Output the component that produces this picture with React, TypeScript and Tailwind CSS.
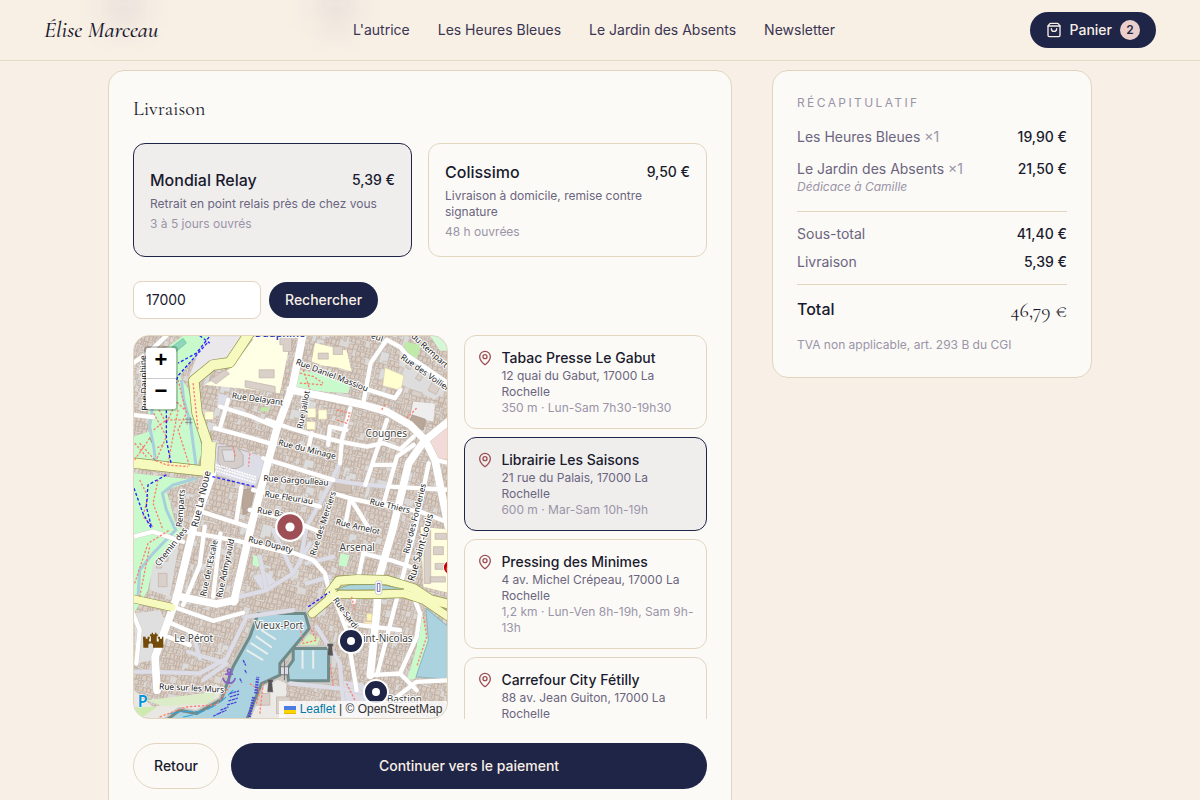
import { useState } from "react";
import { MapPin, ShoppingBag } from "lucide-react";

type Relay = { name: string; address: string; info: string };

const relays: Relay[] = [
  { name: "Tabac Presse Le Gabut", address: "12 quai du Gabut, 17000 La Rochelle", info: "350 m · Lun-Sam 7h30-19h30" },
  { name: "Librairie Les Saisons", address: "21 rue du Palais, 17000 La Rochelle", info: "600 m · Mar-Sam 10h-19h" },
  { name: "Pressing des Minimes", address: "4 av. Michel Crépeau, 17000 La Rochelle", info: "1,2 km · Lun-Ven 8h-19h, Sam 9h-13h" },
  { name: "Carrefour City Fétilly", address: "88 av. Jean Guiton, 17000 La Rochelle", info: "1,8 km · Lun-Sam 8h-20h" },
];

const shippingOptions = [
  { name: "Mondial Relay", price: "5,39 €", text: "Retrait en point relais près de chez vous", delay: "3 à 5 jours ouvrés" },
  { name: "Colissimo", price: "9,50 €", text: "Livraison à domicile, remise contre signature", delay: "48 h ouvrées" },
];

const serif = "font-['Cormorant_Garamond','Liberation_Serif',serif]";

/* Rows of small houses, laid along the slant of the old town's streets. */
function houses(): string {
  let seed = 7;
  const rnd = () => {
    seed = (seed * 16807) % 2147483647;
    return seed / 2147483647;
  };
  let d = "";
  for (let y = -300; y < 1250; y += 17) {
    for (let x = -50; x < 1350; ) {
      const w = 6 + Math.floor(rnd() * 11);
      const h = 11 + Math.floor(rnd() * 6);
      if (rnd() > 0.1) d += `M${x} ${y + Math.floor(rnd() * 3)}h${w}v${h}h${-w}z`;
      x += w + (rnd() > 0.9 ? 6 : 0);
    }
  }
  return d;
}
const housePath = houses();

/* Courtyards that break up the rows. */
function yards(): string {
  let seed = 91;
  const rnd = () => {
    seed = (seed * 16807) % 2147483647;
    return seed / 2147483647;
  };
  let d = "";
  for (let i = 0; i < 150; i++) {
    const x = Math.floor(rnd() * 1300);
    const y = Math.floor(rnd() * 1500) - 300;
    const w = 10 + Math.floor(rnd() * 22);
    const h = 10 + Math.floor(rnd() * 26);
    d += `M${x} ${y}h${w}v${h}h-${Math.floor(w / 2)}v8h-${w - Math.floor(w / 2)}z`;
  }
  return d;
}
const yardPath = yards();

const mainRoads = [
  "M510 10L478 170L430 300L355 585L302 815",
  "M471 180L600 205L690 225L760 245L830 285L875 330L905 390L945 590",
  "M951 270L871 335L826 400L778 600L736 745L731 835L711 1035",
  "M238 430L182 590L130 805L66 980L72 1080",
  "M130 798L250 822L305 810",
];
const roads = [
  "M691 215L712 100L760 30L801 52L820 75L951 165",
  "M706 180L785 205L801 180",
  "M400 270L471 295L530 312L621 335L701 350L751 340L801 358L841 320",
  "M651 235L626 330L620 400",
  "M761 270L696 465",
  "M841 345L791 380L751 520",
  "M721 405L781 405",
  "M886 400L845 600L796 785L731 1035",
  "M260 230L350 258L425 290",
  "M245 295L340 320L425 345",
  "M285 210L262 290",
  "M535 310L525 360M585 345L590 290L640 300",
  "M390 385L471 410L600 450M600 490L651 505L720 520L860 545L951 580",
  "M651 505L635 590M651 505L710 600",
  "M360 480L471 505L560 530M350 540L471 570L560 605",
  "M205 545L350 592",
  "M325 470L310 570",
  "M120 830L240 872L330 848",
  "M104 875L220 925M104 920L170 945",
  "M215 590L200 705L150 825",
  "M262 610L240 800",
  "M160 605L310 632L471 670",
  "M0 100L45 70L100 18M45 70L40 160M0 255L60 262",
  "M0 620L60 605L150 635",
  "M471 665L540 690L575 730L590 790",
  "M661 815L690 670L771 690L831 710",
  "M841 800L860 850L850 920L800 1030",
  "M610 820L640 900L670 1080",
  "M640 880L800 900M711 1035L800 1030L850 1080",
  "M905 390L951 400M771 470L951 480",
  "M790 1100L850 1055L951 1050",
  "M0 850L20 900L10 1000",
];
const quietRoads = [
  "M620 400L571 500L520 590L500 700",
  "M600 450L660 460L760 470",
  "M165 965L280 1000L210 1050M185 930L200 985",
  "M0 1025L60 1025L200 1030L280 985L340 860L480 840",
  "M320 800L400 780L480 730L530 640",
  "M400 780L380 680M480 730L420 600",
  "M520 700L600 680M520 760L590 740",
  "M550 890L620 1000L630 1120",
  "M471 1060L620 1075L760 1100",
];

/* text, x, y, angle, size */
type Label = [string, number, number, number, number];
const streetLabels: Label[] = [
  ["Rue Delayant", 295, 205, 8, 25],
  ["Rue Jaillot", 508, 298, -79, 25],
  ["Rue Daniel Massiou", 486, 103, 21, 25],
  ["Rue du Minage", 434, 345, 14, 25],
  ["Rue Gargoulleau", 390, 453, 4, 25],
  ["Rue Fleuriau", 393, 500, 9, 25],
  ["Rue Ba", 371, 548, 10, 25],
  ["Rue Thiers", 708, 522, 13, 25],
  ["Rue Amelot", 606, 583, 13, 25],
  ["Rue des Voiliers", 800, 86, 35, 25],
  ["du Rempart des", 832, 22, 42, 25],
  ["eul", 712, 25, 18, 25],
  ["Rue La Noue", 194, 593, -77, 29],
  ["Chemin des", 78, 710, -52, 25],
  ["Remparts", 147, 592, -86, 25],
  ["Rue de l'Escale", 218, 800, -78, 25],
  ["Rue Admyrauld", 266, 804, -78, 25],
  ["Rue Dupaty", 344, 635, 14, 25],
  ["Rue des Merciers", 546, 678, -72, 25],
  ["Rue des Fonderies", 826, 672, -76, 25],
  ["Rue Saint-Louis", 842, 755, -74, 29],
  ["Rue Sardi", 598, 810, 54, 25],
  ["Rue sur les Murs", 78, 1077, 3, 25],
  ["Rue Dauphine", 44, 242, -92, 25],
];
const placeLabels: [string, number, number][] = [
  ["Cougnes", 697, 322],
  ["Arsenal", 619, 662],
  ["Vieux-Port", 364, 896],
  ["Le Pérot", 124, 935],
  ["Saint-Nicolas", 656, 935],
  ["Bastion", 760, 1118],
];

const bridgeNorth = "M588 790L616 752L671 748L761 750L841 775L891 808L960 826";
const bridgeSouth = "M537 850L591 805L621 793L721 793L811 790L871 810L960 870";
const ringRoad = "M352 5L290 98L238 106L182 152L192 250L226 350L218 424L-10 398";

function TownMap() {
  return (
    <svg viewBox="3 18 939 1146" preserveAspectRatio="xMidYMid slice" className="block h-full w-full font-['Noto_Sans',sans-serif]" aria-label="Plan de La Rochelle" role="img">
      <rect x="0" y="0" width="960" height="1180" fill="#dcd8d5" />
      <path d={housePath} transform="rotate(15)" fill="#d9cdc4" stroke="#bfaea2" strokeWidth="2" />
      <path d={yardPath} transform="rotate(15)" fill="#dddcdc" stroke="#c6bab1" strokeWidth="2" />

      {/* open ground and blocks */}
      <path d="M215 18L345 18L290 95L235 105L165 145Z" fill="#eae8ea" stroke="#cfc5c0" strokeWidth="2" />
      <path d="M360 22L475 18L440 190L360 180L215 165L300 110Z" fill="#ffffe5" />
      <path d="M440 20h35v45h-25v-20h-10zM378 120h45v24h-45zM336 152l90 18v20l-90-18zM310 70l40-48 8 8-40 52zM230 150l45-30 14 12-40 30z" fill="#d9d0c9" stroke="#c0b1a6" strokeWidth="2" />
      <path d="M800 60l95 60 40 60-30 30-110-50z" fill="#dedddd" />
      <path d="M830 90l14 8-14 22-14-8zM862 120l14 8-16 26-14-8zM800 110l12 6-18 34-12-6zM900 150l24 14-16 30-24-12zM838 180l30 10-6 14-30-10z" fill="#d9d0c9" stroke="#c0b1a6" strokeWidth="2" />
      <path d="M545 40L640 62L655 125L610 112L570 108L535 95Z" fill="#ffffd9" />
      <path d="M555 70h30v18h-30zM600 50h28v24h-28z" fill="#d9d0c9" stroke="#c0b1a6" strokeWidth="2" />
      <path d="M755 113L812 138L803 182L748 168Z" fill="#ffffd0" stroke="#d9cdb0" strokeWidth="2" />
      <path d="M522 235h26v28h-26zM555 240h26v28h-26zM520 275h26v24h-26zM215 245h26v24h-26z" fill="#ffffd9" stroke="#d9cdb0" strokeWidth="2" />
      <path d="M490 118L560 132L650 168L645 190L490 180Z" fill="#c8facc" />
      <path d="M815 36l50 10-20 52-35-20zM385 232h22v12h-28z" fill="#bfeaa8" />
      <path d="M890 18h60v45h-30z" fill="#d5f7d5" />
      <path d="M885 333L951 280V388H910Z" fill="#f2dad9" stroke="#e0b8b8" strokeWidth="2" />
      <path d="M840 215L905 222L900 275L830 262Z" fill="#eeeeee" />
      <path d="M836 255L876 268L870 300L828 285Z" fill="#b8a698" stroke="#a79588" strokeWidth="2" />
      <path d="M325 480L365 475L350 545L330 555Z" fill="#b8a698" stroke="#a79588" strokeWidth="2" />
      <path d="M605 455L655 460L655 490L605 485Z" fill="#cdbfb3" stroke="#b5a598" strokeWidth="2" />
      <path d="M250 340L405 385L365 472L238 430Z" fill="#dddde8" />
      <path d="M256 350h54l20 26v30l-20 10h-42l-14-20z" fill="#d5cecb" stroke="#aaa0a0" strokeWidth="2" />
      <path d="M266 360h38v34h-30z" fill="#e0e0e4" stroke="#aaa0a0" strokeWidth="2" />
      <path d="M240 402l130 40M242 411l126 38M240 420l126 38" fill="none" stroke="#fff" strokeWidth="5" strokeDasharray="6 2" />
      <path d="M255 190l30 8-8 34-24-6z" fill="#dddde8" />
      <path d="M5 850L80 840L95 870L60 990L5 1000Z" fill="#dfdfdf" />
      <path d="M60 640L140 630L110 800L50 780Z" fill="#dedede" />
      <path d="M80 660h30l-6 34h-18v20h-16zM76 730h26v40h-26z" fill="#d9d0c9" stroke="#c0b1a6" strokeWidth="2" />
      <path d="M862 590L951 600V790L870 770Z" fill="#ffffe0" />
      <path d="M872 600h20v160h-20zM905 610h35v18h-35zM900 650h30v24h-30zM905 700h36v18h-36zM890 740h46v16h-46z" fill="#d9d0c9" stroke="#c0b1a6" strokeWidth="2" />
      <path d="M700 850h16v22h-16zM692 875h24v14h-24z" fill="#fff4b0" stroke="#d9cdb0" strokeWidth="2" />
      <path d="M360 675l24 6-6 30-20-6zM622 670l26 6-8 34-24-4z" fill="#c8facc" />
      <path d="M360 740l40-14 30 30-40 30z" fill="#dddde8" />
      <path d="M620 1050l70 10 30 100h-90z" fill="#dddde8" />
      <path d="M345 1010L460 1060L455 1170H300Z" fill="#eceae6" />
      <path d="M365 1090h45v35h-45zM430 1100h40v50h-40z" fill="#d9d0c9" stroke="#c0b1a6" strokeWidth="2" />

      {/* parks */}
      <path d="M150 18L228 18L140 140L165 175L208 360L192 412L3 395V320L48 305L45 235L62 190L80 70Z" fill="#c8facc" />
      <path d="M118 50L150 26L160 40L128 66Z" fill="#8ed7bb" stroke="#62b99a" strokeWidth="2" />
      <path d="M3 430L190 450L100 480L128 585L150 600L60 705L45 780L3 850Z" fill="#c8facc" />
      <path d="M866 840L885 930L846 1045L822 1050L850 950Z" fill="#c8facc" />
      <path d="M500 900L560 925L550 950L480 950Z" fill="#d3efbf" />
      <path d="M3 1080L60 1130L200 1100L250 1060L270 1090L220 1150L60 1164H3Z" fill="#e9e7e2" />
      <path d="M40 1110L250 1085L240 1120L90 1128Z" fill="#dcecc8" />
      <path d="M3 1130h70l-50 34H3Z" fill="#cdebb0" />

      {/* canals and harbour */}
      <g fill="none" stroke="#a9cfdc" strokeWidth="9" strokeLinejoin="round">
        <path d="M145 150L152 210L172 280L190 415" />
        <path d="M58 235L50 290L62 350L68 395" />
        <path d="M190 445L120 465L88 490L100 540L128 600L60 670L20 720L15 800" />
      </g>
      <g fill="#aad3df" strokeLinejoin="round">
        <g stroke="#c9c9c4" strokeWidth="20">
          <path d="M375 850L515 850L528 895L440 1000L440 1035L385 1060L340 1170H100L140 1140L190 1150L265 1108L300 1010L350 920Z" />
          <path d="M480 955L586 955L586 1052L466 1052L462 1015L480 990Z" />
        </g>
        <g stroke="#6f8b8a" strokeWidth="9">
          <path d="M375 850L515 850L528 895L440 1000L440 1035L385 1060L340 1170H100L140 1140L190 1150L265 1108L300 1010L350 920Z" />
          <path d="M480 955L586 955L586 1052L466 1052L462 1015L480 990Z" />
        </g>
        <path d="M878 835L951 895V1048L848 1040L885 930Z" stroke="#8fb6c0" strokeWidth="3" />
      </g>
      <path d="M385 900L428 928M368 918L416 952M352 938L404 972M340 960L390 990M508 960v56M540 960v56" stroke="#e9eeee" strokeWidth="6" />
      <path d="M442 1010h24v24h-24zM454 990v60" fill="#dddde8" stroke="#777" strokeWidth="3" />
      <path d="M110 1150q60-10 90-6M150 1160q90-14 150-80" fill="none" stroke="#2ea4dd" strokeWidth="3" strokeDasharray="30 8" />

      {/* streets */}
      <g fill="none" strokeLinejoin="round" strokeLinecap="round">
        <g stroke="#cfc8c4" strokeWidth="14">{quietRoads.map((d) => <path key={d} d={d} />)}</g>
        <g stroke="#cdc5bf" strokeWidth="15">{roads.map((d) => <path key={d} d={d} />)}</g>
        <g stroke="#c9c1bb" strokeWidth="25">{mainRoads.map((d) => <path key={d} d={d} />)}</g>
        <g stroke="#dddde8" strokeWidth="12">{quietRoads.map((d) => <path key={d} d={d} />)}</g>
        <g stroke="#fff" strokeWidth="13">{roads.map((d) => <path key={d} d={d} />)}</g>
        <g stroke="#fff" strokeWidth="23">{mainRoads.map((d) => <path key={d} d={d} />)}</g>
      </g>
      <g fill="none" strokeLinejoin="round" strokeLinecap="round">
        <g stroke="#8f9445">
          <path d={ringRoad} strokeWidth="33" />
          <path d="M228 340L222 428" strokeWidth="44" strokeLinecap="butt" />
          <path d="M-10 804L116 832" strokeWidth="25" strokeLinecap="butt" />
          <path d={bridgeNorth} strokeWidth="30" />
          <path d={bridgeSouth} strokeWidth="27" />
        </g>
        <g stroke="#f7fabf">
          <path d={ringRoad} strokeWidth="29" />
          <path d="M228 336L222 430" strokeWidth="41" strokeLinecap="butt" />
          <path d="M-10 804L116 832" strokeWidth="22" />
          <path d={bridgeNorth} strokeWidth="26" />
          <path d={bridgeSouth} strokeWidth="23" />
        </g>
      </g>
      <path d="M605 778L650 764L740 763L812 777L720 779L640 780Z" fill="#aad3df" stroke="#8f9445" strokeWidth="2" />
      <rect x="726" y="752" width="20" height="42" rx="9" fill="#fff" stroke="#bbb" strokeWidth="2" />
      <path d="M732 760h8v24h-8z" fill="none" stroke="#2a2a90" strokeWidth="2" />

      {/* footpaths and cycleways */}
      <g fill="none" stroke="#fa8072" strokeWidth="4" strokeDasharray="7 5">
        <path d="M135 150L160 250L135 300L170 410M62 300L100 270L160 270M62 250L100 320L70 390M135 240L105 400M20 340L65 390L100 405L165 410M5 390L50 325M5 340L40 380M78 240L100 280L130 215L155 240" />
        <path d="M20 450L45 500L30 560L60 590M75 450L60 520L90 600M180 160L195 300M5 760L45 640L110 600M20 800L50 650" />
        <path d="M500 130l40 10 30 20M500 160l70 5M510 120l20 60M610 240l40 10-10 30-30-10M870 860l10 60-30 90" />
        <path d="M500 890l10 50 40-10-20-40M590 1000l10 70M80 1160l80-30 90-6 50-70M350 1060l30 20-10 40M390 1060l-10 90M640 1060l40 80M655 800l10 40M300 350l6 30M350 370l-4 40M90 345l-20 10M850 235l-30 30M745 240l12-20" />
      </g>
      <g fill="none" stroke="#2323ff" strokeWidth="4" strokeDasharray="9 6">
        <path d="M228 22L190 70L135 100M222 40L135 138L100 240V330L115 405" />
        <path d="M3 475L30 550L55 595M100 435L45 465L40 530L55 590M238 440L365 470M525 830L590 785M200 18L230 40" />
      </g>
      <g fill="none" stroke="#4a45d8" strokeWidth="4">
        <path d="M330 990l8 16M320 1045l6 12M335 1020l6 10M290 1090l28-8M290 1100l28-8M286 1112l28-8M282 1124l28-8M262 1140l24-10M256 1150l24-10M240 1158l22-10" strokeDasharray="9 2" />
        <path d="M348 1160L362 1100M368 1090L374 1040" strokeWidth="10" strokeDasharray="5 3" />
      </g>
      <path d="M162 262v22M172 262v22M156 268h22M156 278h22M50 322l6 16M60 385l10 10" stroke="#777" strokeWidth="2" fill="none" />

      {/* points of interest */}
      <g fill="none" stroke="#8461c4" strokeWidth="5" strokeLinecap="round">
        <circle cx="288" cy="1022" r="5" />
        <path d="M288 1027v28M278 1032h20M270 1045q4 14 18 14t18-14" />
      </g>
      <path d="M35 920h8v6h6v-6h6v6h-2v8h6v-16h-3v-6h5v-4h4v4h6v-4h4v4h4v6h-3v16h6v-8h-2v-6h6v6h6v-6h4v33H65v-10q-7-8-14 0v10H36z" transform="translate(-5 0)" fill="#734a08" />
      <path d="M402 1047h18v9h-3l3 30h-18l3-30h-3zM582 940h18v9h-3l3 28h-18l3-28h-3z" fill="#555" stroke="#ddd" strokeWidth="1" />
      <circle cx="951" cy="712" r="21" fill="#c00" stroke="#fff" strokeWidth="3" />
      <path d="M944 702h10M942 712v10" stroke="#fff" strokeWidth="4" />
      <text x="14" y="1129" fontSize="48" fontWeight="600" fill="#0092da" stroke="#fff" strokeWidth="3" paintOrder="stroke">P</text>

      <g stroke="#fff" strokeWidth="6" strokeLinejoin="round" paintOrder="stroke" fill="#222">
        {streetLabels.map(([t, x, y, a, size]) => (
          <text key={t} x={x} y={y} transform={`rotate(${a} ${x} ${y})`} fontSize={size}>{t}</text>
        ))}
        {placeLabels.map(([t, x, y]) => (
          <text key={t} x={x} y={y} fontSize="30" fill="#444">{t}</text>
        ))}
        <text x="365" y="22" fontSize="32" fontWeight="600" fill="#2a35a8">Dauphine</text>
      </g>
    </svg>
  );
}

const markers = [
  { label: "Tabac Presse Le Gabut", place: "left-[204px] top-[292px] size-[26px]", color: "#1f2547" },
  { label: "Librairie Les Saisons", place: "left-[141px] top-[176px] size-[30px]", color: "#9d4f55" },
  { label: "Pressing des Minimes", place: "left-[229px] top-[343px] size-[26px]", color: "#1f2547" },
];

function RelayMap({ onPick }: { onPick: (name: string) => void }) {
  return (
    <div className="relative h-96 overflow-hidden rounded-2xl border border-[#e2d5c0]">
      <TownMap />
      {markers.map((m) => (
        <button key={m.label} aria-label={m.label} onClick={() => onPick(m.label)} className={`absolute ${m.place}`}>
          <svg viewBox="0 0 26 26" className="block h-full w-full">
            <circle cx="13" cy="13" r="12" fill={m.color} stroke="#fff" strokeWidth="2" />
            <circle cx="13" cy="13" r="4" fill="#fff" />
          </svg>
        </button>
      ))}
      <div className="absolute left-2.5 top-2.5 flex w-[34px] flex-col rounded border-2 border-black/20 bg-white bg-clip-padding font-['Liberation_Sans',sans-serif] text-[22px] font-bold leading-6 text-black">
        <button aria-label="Zoom avant" className="h-[31px] border-b border-[#ccc] pb-1.5">+</button>
        <button aria-label="Zoom arrière" className="h-[30px] pb-1.5">−</button>
      </div>
      <div className="absolute bottom-0 right-0 flex items-center bg-white/80 px-[5px] font-['Liberation_Sans',sans-serif] text-xs leading-[17px] text-[#333]">
        <a href="#leaflet" className="flex items-center gap-1 text-[#0078a8]">
          <svg viewBox="0 0 12 8" className="h-2 w-3" aria-hidden="true">
            <path fill="#4c7be1" d="M0 0h12v4H0z" />
            <path fill="#ffd500" d="M0 4h12v3H0z" />
            <path fill="#e0bc00" d="M0 7h12v1H0z" />
          </svg>
          Leaflet
        </a>
        <span className="whitespace-pre"> | © OpenStreetMap</span>
      </div>
    </div>
  );
}

function Header() {
  return (
    <header className="sticky top-0 z-10 border-b border-[#e6dac7] bg-[#f8efe5]">
      <div className="absolute inset-0 overflow-hidden" aria-hidden="true">
        <div className="absolute -top-5 left-[108px] h-12 w-8 bg-[#1f2547]/8 blur-lg" />
        <div className="absolute -top-5 left-[320px] h-12 w-8 bg-[#1f2547]/8 blur-lg" />
      </div>
      <div className="relative flex h-[60px] items-center justify-between px-11">
        <a href="#accueil" className={`${serif} text-[23px] font-medium italic leading-8 text-[#1a1a2e]`}>Élise Marceau</a>
        <nav className="flex gap-7 text-sm text-[#3a3551]">
          <a href="#autrice">L'autrice</a>
          <a href="#heures">Les Heures Bleues</a>
          <a href="#jardin">Le Jardin des Absents</a>
          <a href="#newsletter">Newsletter</a>
        </nav>
        <button className="flex h-9 items-center gap-2 rounded-full bg-[#1f2547] px-4 text-sm font-medium text-[#f8efe6]">
          <ShoppingBag className="size-4" strokeWidth={2} />
          Panier
          <span className="flex size-5 items-center justify-center rounded-full bg-[#eacfcb] text-xs font-semibold text-[#1f2547]">2</span>
        </button>
      </div>
    </header>
  );
}

function Line({ label, price, qty, note }: { label: string; price: string; qty?: string; note?: string }) {
  return (
    <div className="flex justify-between gap-3 text-sm">
      <div className="text-[#6b6580]">
        {label} {qty && <span className="text-[#9a94a8]">{qty}</span>}
        {note && <p className="text-xs italic text-[#9a94a8]">{note}</p>}
      </div>
      <span className="font-medium text-[#1a1a2e]">{price}</span>
    </div>
  );
}

export default function App() {
  const [option, setOption] = useState("Mondial Relay");
  const [relay, setRelay] = useState("Librairie Les Saisons");
  const [zip, setZip] = useState("17000");
  const picked = "border-[#1f2547] bg-[#efeeed]";
  const idle = "border-[#e2d5c0]";

  return (
    <div className="min-h-screen bg-[#f8efe6] font-['Inter',sans-serif] text-[#1a1a2e]">
      <Header />
      <main className="mx-auto grid max-w-5xl grid-cols-[minmax(0,1fr)_320px] items-start gap-10 px-5 pb-16 pt-[9px]">
        <section className="rounded-2xl border border-[#e2d5c0] bg-[#fbfaf6] p-6">
          <h2 className={`${serif} text-xl leading-7`}>Livraison</h2>

          <div className="mt-5 grid grid-cols-2 gap-4">
            {shippingOptions.map((o) => (
              <button key={o.name} aria-pressed={option === o.name} onClick={() => setOption(o.name)} className={`rounded-xl border p-4 text-left ${option === o.name ? picked : idle}`}>
                <span className="flex items-center justify-between">
                  <span className="font-medium">{o.name}</span>
                  <span className="text-sm font-medium">{o.price}</span>
                </span>
                <span className="mt-1 block text-xs text-[#6b6580]">{o.text}</span>
                <span className="mt-1 block text-xs text-[#9a94a8]">{o.delay}</span>
              </button>
            ))}
          </div>

          <form className="mt-6 flex items-center gap-2" onSubmit={(e) => e.preventDefault()}>
            <input aria-label="Code postal" value={zip} onChange={(e) => setZip(e.target.value)} className="w-32 rounded-lg border border-[#e2d5c0] bg-white px-3 py-2 text-sm" />
            <button className="h-9 rounded-full bg-[#1f2547] px-4 text-sm font-medium text-[#f8efe6]">Rechercher</button>
          </form>

          <div className="mt-4 grid grid-cols-[1.3fr_1fr] gap-4">
            <RelayMap onPick={setRelay} />
            <ul className="flex h-96 flex-col gap-2 overflow-y-auto [scrollbar-width:none]">
              {relays.map((r) => (
                <li key={r.name}>
                  <button onClick={() => setRelay(r.name)} aria-pressed={relay === r.name} className={`flex w-full items-start gap-2 rounded-xl border p-3 text-left ${relay === r.name ? picked : idle}`}>
                    <MapPin className="mt-0.5 size-4 shrink-0 text-[#9d4f55]" strokeWidth={2} />
                    <span className="block text-xs">
                      <span className="block text-sm font-medium">{r.name}</span>
                      <span className="block text-[#6b6580]">{r.address}</span>
                      <span className="block text-[#9a94a8]">{r.info}</span>
                    </span>
                  </button>
                </li>
              ))}
            </ul>
          </div>

          <div className="mt-6 flex gap-3 text-sm font-medium">
            <button className="rounded-full border border-[#e2d5c0] px-5 py-3">Retour</button>
            <button className="flex-1 rounded-full bg-[#1f2547] px-5 py-3 text-[#f8efe6]">Continuer vers le paiement</button>
          </div>
        </section>

        <aside className="rounded-2xl border border-[#e2d5c0] bg-[#fbfaf6] p-6">
          <h3 className="text-xs uppercase tracking-[0.2em] text-[#9a94a8]">Récapitulatif</h3>
          <div className="mt-4 flex flex-col gap-3">
            <Line label="Les Heures Bleues" qty="×1" price="19,90 €" />
            <Line label="Le Jardin des Absents" qty="×1" note="Dédicace à Camille" price="21,50 €" />
          </div>
          <div className="mt-4 flex flex-col gap-2 border-t border-[#e2d5c0] pt-3">
            <Line label="Sous-total" price="41,40 €" />
            <Line label="Livraison" price="5,39 €" />
          </div>
          <div className="mt-3 flex items-start justify-between border-t border-[#e2d5c0] pt-3 font-medium">
            <span>Total</span>
            <span className={`${serif} text-xl font-normal leading-7`}>46,79 €</span>
          </div>
          <p className="mt-3 text-xs text-[#9a94a8]">TVA non applicable, art. 293 B du CGI</p>
        </aside>
      </main>
    </div>
  );
}
